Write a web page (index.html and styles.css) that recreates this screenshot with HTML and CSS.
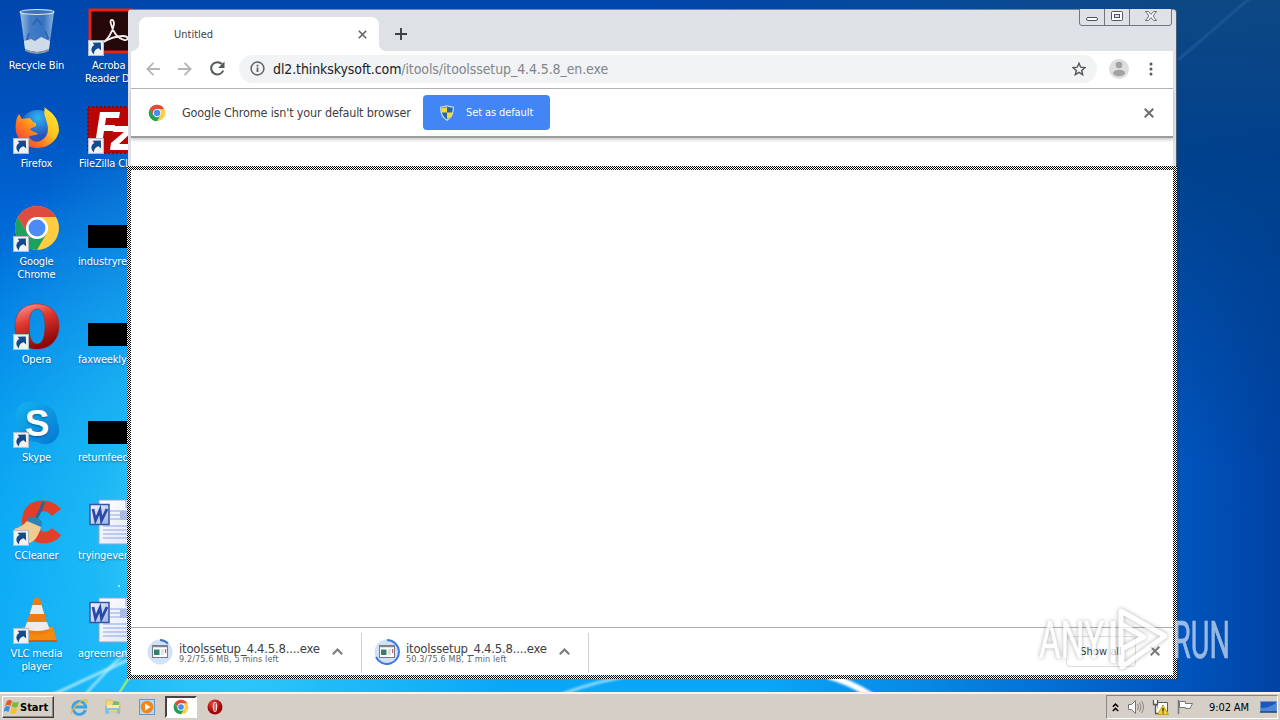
FILE: index.html
```html
<!DOCTYPE html>
<html lang="en">
<head>
<meta charset="utf-8">
<title>Desktop</title>
<link rel="stylesheet" href="styles.css">
</head>
<body>
<svg class="defs" width="0" height="0">
  <defs>
    <linearGradient id="glass" x1="0" x2="1"><stop offset="0" stop-color="#b9d3ee"/><stop offset=".3" stop-color="#4f86c8"/><stop offset=".7" stop-color="#3f7cc4"/><stop offset="1" stop-color="#a9c6e6"/></linearGradient>
    <linearGradient id="fox" x1="1" x2="0" y1="0" y2="1"><stop offset="0" stop-color="#fff03c"/><stop offset=".4" stop-color="#ffc420"/><stop offset=".65" stop-color="#ff7a20"/><stop offset="1" stop-color="#f0244c"/></linearGradient>
    <radialGradient id="globe" cx=".5" cy=".2"><stop offset="0" stop-color="#2bb4f4"/><stop offset="1" stop-color="#2c51b8"/></radialGradient>
    <linearGradient id="op" x1="0" x2=".4" y1="0" y2="1"><stop offset="0" stop-color="#ffa49c"/><stop offset=".45" stop-color="#e0362e"/><stop offset="1" stop-color="#8c0808"/></linearGradient>
    <linearGradient id="sky" x1="0" x2="1" y1="0" y2="1"><stop offset="0" stop-color="#14b4ee"/><stop offset="1" stop-color="#0478d4"/></linearGradient>
    <linearGradient id="page" x2="1" y2="1"><stop offset="0" stop-color="#fff"/><stop offset="1" stop-color="#dfe4f6"/></linearGradient>
    <linearGradient id="wbox" x2="1" y2="1"><stop offset="0" stop-color="#f4f7ff"/><stop offset="1" stop-color="#9db2e4"/></linearGradient>
    <radialGradient id="redball" cx=".4" cy=".3"><stop offset="0" stop-color="#f05048"/><stop offset="1" stop-color="#a00808"/></radialGradient>
    <filter id="soft"><feGaussianBlur stdDeviation="1"/></filter>
    <symbol id="shortcut" viewBox="0 0 15 15">
      <rect x=".5" y=".5" width="14" height="14" fill="#f0f2f4" stroke="#b4bcc8"/>
      <path d="M5.500 13.500C2.200 10.500 2.500 6.500 6 4.800L4.300 2.500 12 2.300 12.300 9.800 10 7.800C7.200 8.300 5.600 10.200 5.500 13.500z" fill="#124a8c"/>
    </symbol>
    <symbol id="chrome" viewBox="0 0 48 48">
      <circle cx="24" cy="24" r="22" fill="#ffcd42"/>
      <path d="M4.950 13A22 22 0 0 0 24 46L33.500 29.500 14.500 29.500z" fill="#1da15f"/>
      <path d="M4.950 13A22 22 0 0 1 43.050 13H24L14.500 29.500z" fill="#de4b40"/>
      <circle cx="24" cy="24" r="11" fill="#fff"/><circle cx="24" cy="24" r="8.500" fill="#4c8bf5"/>
    </symbol>
    <symbol id="word" viewBox="0 0 48 48">
      <path d="M11 2h37v44H11z" fill="url(#page)" stroke="#93a3cf"/>
      <path d="M22 13h26M22 17h26M22 21h26M15 28h33M15 32h33M15 36h33M15 40h33" stroke="#8ba5e4"/>
      <path d="M32 13h16v9H32z" fill="#a9b9e2"/><path d="M38 2v8h10" fill="#fff" stroke="#8ea0cc"/>
      <rect x="2" y="6.500" width="19" height="20" fill="url(#wbox)" stroke="#3455a8" stroke-width="1.500"/>
      <path d="M5 11l2.500 11.500L12 12l1.500 10.500L19 11" fill="none" stroke="#284ca6" stroke-width="2.800"/>
    </symbol>
    <symbol id="setup" viewBox="0 0 26 26">
      <circle cx="13" cy="13" r="12.500" fill="#d3e1f8"/>
      <rect x="5.500" y="6.500" width="15" height="12" fill="#fff" stroke="#777c84"/>
      <path d="M5 7.500h16" stroke="#7e8793" stroke-width="1.500"/><path d="M7 10.500h5.500v5.500H7z" fill="#34806e"/><path d="M14 11h3M14 13h3M14 15h3" stroke="#abb" stroke-width=".8"/><path d="M18.700 10v4" stroke="#c33"/>
    </symbol>
  </defs>
</svg>

<main class="desktop">
  <svg class="wallpaper" viewBox="0 0 1280 720">
    <path d="M0 720Q70 686 150 650L220 620" fill="none" stroke="#d8fbff" stroke-width="3" opacity=".7" filter="url(#soft)"/>
    <path d="M84 696Q102 675 130 648" fill="none" stroke="#c8f5ff" stroke-width="2.500" opacity=".7" filter="url(#soft)"/>
    <path d="M118 695L132 673" stroke="#9be870" stroke-width="2.500" opacity=".9"/>
    <path d="M555 697Q590 682 640 674" fill="none" stroke="#c0f0ff" stroke-width="3" opacity=".7" filter="url(#soft)"/>
    <path d="M828 676Q850 682 872 696" fill="none" stroke="#fff" stroke-width="6" filter="url(#soft)"/>
    <path d="M1178 60L1250 -2" stroke="#4f86bc" stroke-width="1.500" opacity=".5" filter="url(#soft)"/>
    <circle cx="119" cy="586" r="1" fill="#d8f8ff"/>
  </svg>

  <section class="icons">
    <div class="item"><svg viewBox="0 0 48 48"><path d="M7 4h34l-5 37q-12 6-24 0z" fill="url(#glass)" opacity=".85"/><ellipse cx="24" cy="4" rx="17" ry="2.500" fill="#3f74b8" stroke="#d8e6f4" stroke-width="1.200"/><path d="M20 17l4-6 5 6M16 25l-2 7 7 1M30 33l5-3-3-7" fill="none" stroke="#2f65b0" stroke-width="2"/><path d="M11 33l7-2 4 2 6-4 9 4-1 8q-12 6-24 0z" fill="#dfe6ec" opacity=".9"/><path d="M12 41q12 6 24 0v2q-12 6-24 0z" fill="#8e959c"/></svg><span>Recycle Bin</span></div>
    <div class="item"><svg viewBox="0 0 48 48"><circle cx="25" cy="23" r="19" fill="url(#globe)"/><path d="M31 1c7 5 15 10 15 24a22 21 0 0 1-43 1C2 19 3 12 6 8l3 5 8-1c2 3 4 5 6 5v3l-6 3c2 3 6 3 8 5-4 2-8 1-9 3 3 5 9 6 13 3 6-4 7-10 5-17-1-5-4-8-2-16z" fill="url(#fox)"/></svg><svg class="arrow"><use href="#shortcut"/></svg><span>Firefox</span></div>
    <div class="item"><svg><use href="#chrome"/></svg><svg class="arrow"><use href="#shortcut"/></svg><span>Google<br>Chrome</span></div>
    <div class="item"><svg viewBox="0 0 48 48"><path fill-rule="evenodd" d="M24 2C38 2 46 11 46 24S38 47 24 47 2 37 2 24 10 2 24 2zM24 7c-6 0-8 8-8 17s2 18 8 18 8-9 8-18-2-17-8-17z" fill="url(#op)" stroke="#a61b18" stroke-width=".5"/></svg><svg class="arrow"><use href="#shortcut"/></svg><span>Opera</span></div>
    <div class="item"><svg viewBox="0 0 48 48"><path d="M14 2c6-1 9 1 12 2 11 0 19 8 18 18 5 8 1 20-9 22-5 1-8-1-11-2C12 42 4 34 5 24-1 14 5 3 14 2z" fill="url(#sky)"/><text x="24" y="36" class="skype-s">S</text></svg><svg class="arrow"><use href="#shortcut"/></svg><span>Skype</span></div>
    <div class="item"><svg viewBox="0 0 48 48"><path d="M48 11C38-1 15-1 10 16c-6 20 14 37 33 26 2-1 4-3 5-5l-9-7c-6 7-15 4-15-7s9-13 15-5z" fill="#e23f2a"/><path d="M31 4l-9 20" stroke="#22689c" stroke-width="3"/><path d="M15 20q9-3 14 4l-1 6-13-4z" fill="#2b84b8"/><path d="M14 23l14 6c-2 8-6 14-11 16L1 31q8-2 13-8z" fill="#f1cc92"/></svg><svg class="arrow"><use href="#shortcut"/></svg><span>CCleaner</span></div>
    <div class="item"><svg viewBox="0 0 48 48"><path d="M9 31h31l4 15H5z" fill="#f28a12"/><path d="M5 44h39v2H5z" fill="#c96206"/><path d="M21 3q3-3 6 0l10 33q-13 5-26 0z" fill="#f07c10"/><path d="M19.500 9h9l2.700 9H16.800zM14 26h20l2.500 7q-12.500 4-25 0z" fill="#ececec"/></svg><svg class="arrow"><use href="#shortcut"/></svg><span>VLC media<br>player</span></div>
  </section>
  <section class="icons second">
    <div class="item"><svg viewBox="0 0 48 48"><rect x="5" y="2" width="44" height="42" fill="#25080a" stroke="#e6230f" stroke-width="3"/><path d="M17 35c6-3 11-12 12-19 0-6-5-5-3 0 2 9 7 14 13 16 5 1 5-4-1-4-8 0-15 3-21 7z" fill="none" stroke="#f4eef0" stroke-width="1.800"/></svg><svg class="arrow"><use href="#shortcut"/></svg><span class="acro"><i>Acroba</i><br>Reader D</span></div>
    <div class="item"><svg viewBox="0 0 48 48"><rect x="3" y="1" width="46" height="46" fill="#b80505" stroke="#980000" stroke-width="2" stroke-dasharray="2 2"/><path d="M10 38L15 6h20l-1 6H21l-1 7h10l-1 6H19l-2 13zM29 20h19v5L34 38h14v6H25l1-7 13-11H28z" fill="#fff"/></svg><svg class="arrow"><use href="#shortcut"/></svg><span class="fz">FileZilla Cli</span></div>
    <div class="item"><svg viewBox="0 0 48 48"><path d="M3 21h45v23H3z"/></svg><span>industryre</span></div>
    <div class="item"><svg viewBox="0 0 48 48"><path d="M3 21h45v23H3z"/></svg><span class="fax">faxweekly</span></div>
    <div class="item"><svg viewBox="0 0 48 48"><path d="M3 21h45v23H3z"/></svg><span>returnfeed</span></div>
    <div class="item doc"><svg><use href="#word"/></svg><span>tryingever</span></div>
    <div class="item doc"><svg><use href="#word"/></svg><span>agreement</span></div>
  </section>

  <section class="window">
    <header class="tabstrip">
      <div class="tab"><span>Untitled</span><svg width="9" height="9" viewBox="0 0 9 9"><path d="M.8.8l7.400 7.400M8.200.8L.8 8.200" stroke="#5f6367" stroke-width="1.600"/></svg></div>
      <svg class="plus" width="12" height="12" viewBox="0 0 12 12"><path d="M6 0v12M0 6h12" stroke="#3c4043" stroke-width="1.900"/></svg>
      <svg class="caption" width="94" height="18" viewBox="0 0 94 18"><path d="M.5 0v14q0 2.500 2.500 2.500h87q2.500 0 2.500-2.500V0M25.500 0v16.500M50.500 0v16.500" fill="#dee1e6" stroke="#70767e"/><rect x="7.500" y="8.500" width="11" height="3" rx="1.500" fill="#fff" stroke="#50555c"/><rect x="32.500" y="2.500" width="11" height="9" rx="1" fill="#fff" stroke="#50555c"/><rect x="35.500" y="5.500" width="5" height="3" fill="#dee1e6" stroke="#50555c"/><path d="M66.500 2.500h3l2.500 3 2.500-3h3L74 7l3.500 4.500h-3L72 8.500l-2.500 3h-3L70 7z" fill="#fff" stroke="#6a6f76"/></svg>
    </header>
    <nav class="toolbar">
      <svg width="14" height="14" viewBox="0 0 14 14"><path d="M14 7H1.500M7.500.8L1.300 7l6.200 6.200" fill="none" stroke="#b4b6b9" stroke-width="1.800"/></svg>
      <svg width="14" height="14" viewBox="0 0 14 14"><path d="M0 7h12.500M6.500.8L12.700 7l-6.200 6.200" fill="none" stroke="#b4b6b9" stroke-width="1.800"/></svg>
      <svg width="15" height="15" viewBox="0 0 15 15"><path d="M13.200 9.500A6.200 6.200 0 1 1 12 3.200" fill="none" stroke="#54585c" stroke-width="2"/><path d="M14.500.5v6.400H8.100z" fill="#54585c"/></svg>
      <div class="omnibox">
        <svg width="15" height="15" viewBox="0 0 15 15"><circle cx="7.500" cy="7.500" r="6.400" fill="none" stroke="#5f6368" stroke-width="1.500"/><path d="M7.500 6.500V11M7.500 3.700v1.700" stroke="#5f6368" stroke-width="1.800"/></svg>
        <span class="url"><b>dl2.thinkskysoft.com</b><em>/itools/itoolssetup_4.4.5.8_en.exe</em></span>
        <svg width="14" height="14" viewBox="0 0 14 14"><path d="M7 1.200l1.700 4 4.300.4-3.300 2.800 1 4.300L7 10.400l-3.700 2.300 1-4.300L1 5.600l4.300-.4z" fill="none" stroke="#54585c" stroke-width="1.400"/></svg>
      </div>
      <svg class="avatar" width="20" height="20" viewBox="0 0 20 20"><circle cx="10" cy="10" r="10" fill="#dedede"/><circle cx="10" cy="6" r="3.300" fill="#a2a2a2"/><ellipse cx="10" cy="14" rx="6" ry="3.200" fill="#a2a2a2"/></svg>
      <svg class="dots" width="4" height="14" viewBox="0 0 4 14"><path d="M2 .4a1.500 1.500 0 1 1 0 3 1.500 1.500 0 0 1 0-3M2 5.500a1.500 1.500 0 1 1 0 3 1.500 1.500 0 0 1 0-3M2 10.600a1.500 1.500 0 1 1 0 3 1.500 1.500 0 0 1 0-3" fill="#54585c"/></svg>
    </nav>
    <div class="infobar">
      <svg width="18" height="18"><use href="#chrome"/></svg>
      <span class="msg">Google Chrome isn't your default browser</span>
      <div class="primary"><svg width="14" height="16" viewBox="0 0 14 16"><path d="M7 .8Q9.500 2 13.200 2 14 11 7 15.200 0 11 .8 2 4.500 2 7 .8z" fill="#2566ac" stroke="#d8dfe8" stroke-width="1.200"/><path d="M7 2v5.500H1.500Q1.200 5 1.500 3 5 3 7 2zM7 7.500h5.500Q11.500 12 7 14z" fill="#fbd935"/></svg><span>Set as default</span></div>
      <svg class="x" width="10" height="10" viewBox="0 0 10 10"><path d="M.7.700l8.600 8.600M9.300.7L.7 9.300" stroke="#6b6e70" stroke-width="2"/></svg>
    </div>
    <div class="page"></div>
    <footer class="shelf">
      <div class="download"><svg width="26" height="26"><use href="#setup"/><path d="M13 1A12 12 0 0 1 21 4.500" fill="none" stroke="#4175d0" stroke-width="2"/></svg><div class="file"><span>itoolssetup_4.4.5.8....exe</span><small>9.2/75.6 MB, 5 mins left</small></div><svg width="11" height="7" viewBox="0 0 11 7"><path d="M.8 6.200L5.500 1.500l4.700 4.700" fill="none" stroke="#76797d" stroke-width="2"/></svg></div>
      <div class="download"><svg width="26" height="26"><use href="#setup"/><path d="M13 1A12 12 0 1 1 2 18" fill="none" stroke="#3c7ae0" stroke-width="2"/></svg><div class="file"><span>itoolssetup_4.4.5.8....exe</span><small>50.3/75.6 MB, 1 min left</small></div><svg width="11" height="7" viewBox="0 0 11 7"><path d="M.8 6.200L5.500 1.500l4.700 4.700" fill="none" stroke="#76797d" stroke-width="2"/></svg></div>
      <div class="showall">Show all</div>
      <svg class="x2" width="10" height="10" viewBox="0 0 10 10"><path d="M.7.700l8.600 8.600M9.300.7L.7 9.300" stroke="#77797b" stroke-width="2"/></svg>
    </footer>
  </section>
  <div class="outline"></div>

  <svg class="watermark" viewBox="0 0 200 72">
    <g class="mark left"><text x="4" y="54" textLength="65" lengthAdjust="spacingAndGlyphs">ANY</text><path d="M78 17v42M86 62V7l44 25-43 31V45l22-12-23-13"/></g>
    <g class="mark"><text x="138" y="54" textLength="57" lengthAdjust="spacingAndGlyphs">RUN</text></g>
  </svg>
</main>

<footer class="taskbar">
  <div class="start"><svg width="17" height="16" viewBox="0 0 17 16"><path d="M4 2q3-2 5 0L7.500 7q-3-2-5.500 0z" fill="#e8572a"/><path d="M10 2.500q3 2 6 0L14.500 8q-3 1.500-6-.5z" fill="#7db93a"/><path d="M2 8q3-2 5 0l-1.500 5q-3-2-5 0z" fill="#3d8fd8"/><path d="M8.300 8.500q3 2 6 0L13 14q-3 2-6-.5z" fill="#f6c22c"/></svg><b>Start</b></div>
  <div class="quick">
    <svg width="18" height="18" viewBox="0 0 18 18"><path d="M15.500 12A6.500 6.500 0 1 1 15.800 9H5" fill="none" stroke="#3aa4e4" stroke-width="2.800"/><path d="M2 16C-1 13 12 0 16.500 2q1.500 1.500-1 4" fill="none" stroke="#e6b93c" stroke-width="1.300"/></svg>
    <svg width="18" height="18" viewBox="0 0 18 18"><path d="M2 2h6l1 2h7v10H2z" fill="#f3d77a" stroke="#d9b654" stroke-width=".7"/><path d="M10 3l5 1v3H8z" fill="#78b878"/><path d="M1 8h15v8h-3v-4H5v4H1z" fill="#7cc0ea" opacity=".9"/><path d="M3 7h12v3H3z" fill="#fbeaa6"/></svg>
    <svg width="18" height="18" viewBox="0 0 18 18"><rect x="1.500" y="1.500" width="15" height="15" fill="#b7d8f5" stroke="#5a9bd6"/><circle cx="9" cy="9" r="6.300" fill="#f28618"/><path d="M7 5.500L12.500 9 7 12.500z" fill="#fff"/></svg>
    <div class="active"><svg width="16" height="16"><use href="#chrome"/></svg></div>
    <svg width="18" height="18" viewBox="0 0 18 18"><circle cx="9" cy="9" r="7.500" fill="url(#redball)"/><ellipse cx="9" cy="9" rx="2.200" ry="5" fill="#f8d8d4"/><path d="M9 5v8" stroke="#a01010"/></svg>
  </div>
  <div class="tray">
    <svg class="chev" width="7" height="9" viewBox="0 0 7 9"><path d="M.8 3.700l2.700-2.600 2.700 2.600M.8 8l2.700-2.600L6.200 8" fill="none" stroke="#000" stroke-width="1.500"/></svg>
    <svg width="17" height="16" viewBox="0 0 17 16"><path d="M1.500 5.500h3l4-4v13l-4-4h-3z" fill="#fff" stroke="#777"/><path d="M10.500 5q2 3 0 6M12.500 3.500q3 4.500 0 9M14.500 2q4 6 0 12" fill="none" stroke="#858585"/></svg>
    <svg width="17" height="16" viewBox="0 0 17 16"><path d="M5 3.500h10.500v9H5z" fill="#fff" stroke="#5c5c5c"/><path d="M1.500 1v4.500h4V1M3.500 5v9.500H8" fill="#fff" stroke="#555" stroke-width="1.300"/><path d="M11 6l5.500 9.500h-11z" fill="#f7cf25" stroke="#b08a08" stroke-width=".7"/><path d="M11 9v3.500M11 13.500v1" stroke="#222" stroke-width="1.300"/></svg>
    <svg width="17" height="16" viewBox="0 0 17 16"><path d="M2.500 2.500h6v2h7l-2.500 5H8.500v-1h-6z" fill="#fff" stroke="#777"/><path d="M1.500 1v14" stroke="#777" stroke-width="1.500"/></svg>
    <time>9:02 AM</time>
    <svg class="show" width="17" height="14" viewBox="0 0 17 14"><path d="M.5 1.500h16v10H.5z" fill="#1d56b8" stroke="#6d94c8"/><path d="M1 8q8 0 15-5v8H1z" fill="#4a86da"/><path d="M0 12h17" stroke="#203c70" stroke-width="1.500"/></svg>
  </div>
</footer>
</body>
</html>
```
FILE: styles.css
```css
* { box-sizing: border-box; }
body { margin: 0; width: 1280px; height: 720px; overflow: hidden; display: flex; flex-direction: column; font-family: "DejaVu Sans Condensed", "DejaVu Sans", sans-serif; font-stretch: condensed; font-size: 11px; color: #3c4043; }
svg { display: block; flex: none; }
.defs { position: absolute; }
.desktop { position: relative; height: 692px; overflow: hidden; display: flex; align-items: flex-start;
  background:
    radial-gradient(ellipse 300px 460px at 230px 540px, rgba(80,225,250,.9), rgba(50,205,248,.55) 45%, transparent 100%),
    linear-gradient(90deg, transparent 1040px, rgba(0,55,135,.1) 1180px, rgba(0,50,135,.55) 1280px),
    linear-gradient(90deg, transparent 60%, #0058c4 92%),
    linear-gradient(#0046ac 0, #0052be 110px, #0064d2 200px, #007ee4 310px, #0094ee 420px, #02a0f4 540px, #0aa6f8 692px);
}
.desktop::before { content: ""; position: absolute; left: 640px; right: 0; top: 0; height: 460px; background: linear-gradient(rgba(14,72,132,1) 0, rgba(0,64,138,.95) 35%, transparent); -webkit-mask-image: linear-gradient(90deg, transparent, #000 80%); mask-image: linear-gradient(90deg, transparent, #000 80%); }
.wallpaper { position: absolute; left: 0; top: 0; width: 1280px; height: 720px; }
.icons { position: relative; width: 73px; padding-top: 8px; display: flex; flex-direction: column; }
.item { position: relative; flex: none; height: 98px; display: flex; flex-direction: column; align-items: center; gap: 3px; color: #fff; text-align: center; line-height: 13px; text-shadow: 0 1px 2px rgba(0,30,80,.5); letter-spacing: -.15px; white-space: nowrap; }
.item > svg:first-child { width: 48px; height: 48px; }
.item .arrow { position: absolute; left: 13px; top: 32px; width: 16px; height: 16px; }
.icons.second { width: 62px; margin-left: 5px; }
.second .item { align-items: flex-start; text-align: left; }
.second .item > svg:first-child { margin-left: 7px; }
.second .doc > svg:first-child { margin-left: 10px; }
.second .item .arrow { left: 10px; }
.second i { font-style: normal; padding-left: 7px; }
.second .acro { padding-left: 7px; }
.second .fz { padding-left: 1px; }
.skype-s { font: bold 37px "Liberation Sans", sans-serif; fill: #fff; text-anchor: middle; }

.window { position: absolute; left: 128px; top: 9px; width: 1048px; height: 668px; border: solid #dee1e6; border-width: 0 3px; border-top: 1px solid #7a838f; border-radius: 4px 4px 0 0; background: #fff; display: flex; flex-direction: column; box-shadow: 1px 0 0 #4a5d78; }
.tabstrip { height: 41px; background: #dee1e6; display: flex; align-items: flex-start; padding-left: 8px; }
.tab { position: relative; width: 240px; height: 34px; margin-top: 7px; background: #fff; border-radius: 8px 8px 0 0; display: flex; align-items: center; justify-content: space-between; padding: 0 12px 0 35px; }
.tab::before, .tab::after { content: ""; position: absolute; bottom: 0; width: 8px; height: 8px; }
.tab::before { left: -8px; background: radial-gradient(circle at 0 0, transparent 8px, #fff 8.5px); }
.tab::after { right: -8px; background: radial-gradient(circle at 100% 0, transparent 8px, #fff 8.5px); }
.plus { margin: 18px 0 0 16px; }
.caption { margin: -1px 0 0 auto; }
.toolbar { height: 38px; border-bottom: 1px solid #b2b3b5; display: flex; align-items: center; padding: 0 20px 2px 15px; gap: 18px; }
.omnibox { width: 858px; height: 28px; border-radius: 14px; background: #f1f3f4; margin-left: -4px; display: flex; align-items: center; padding: 0 11px; }
.url { flex: 1; margin-left: 8px; font-size: 14px; letter-spacing: -.1px; white-space: nowrap; }
.url b { font-weight: 400; color: #202124; }
.url em { font-style: normal; color: #80868b; }
.avatar { margin-left: -6px; }
.dots { margin-left: 2px; }
.infobar { height: 49px; border-bottom: 2px solid #9b9d9f; display: flex; align-items: center; padding: 0 19px 0 17px; box-shadow: 0 2px 3px rgba(0,0,0,.2); }
.msg { width: 241px; margin-left: 16px; font-size: 12.500px; letter-spacing: -.16px; white-space: nowrap; }
.primary { width: 127px; height: 35px; border-radius: 4px; background: #4285f4; color: #fff; display: flex; align-items: center; padding-left: 17px; gap: 12px; letter-spacing: -.1px; white-space: nowrap; }
.infobar .x { margin-left: auto; }
.page { flex: 1; }
.shelf { height: 50px; border-top: 1px solid #adaeb0; display: flex; align-items: center; }
.download { width: 227px; height: 40px; display: flex; align-items: center; border-right: 1px solid #d0d2d4; padding: 0 0 2px 12px; }
.download:first-child { width: 231px; padding-left: 16px; }
.file { width: 153px; margin-left: 6px; padding-top: 2px; display: flex; flex-direction: column; font-size: 13px; letter-spacing: -.22px; line-height: 13px; white-space: nowrap; }
.file small { font-size: 9px; letter-spacing: .12px; line-height: 9px; color: #5f6368; }
.showall { width: 70px; height: 31px; margin: 0 0 2px auto; border: 1px solid #dcdddf; border-radius: 4px; display: flex; align-items: center; justify-content: center; }
.x2 { margin: 0 13px 3px 14px; }

.outline { position: absolute; left: 127px; top: 166px; width: 1050px; height: 513px; background: repeating-conic-gradient(#000 0 25%, #fff 0 50%) 0 0/2px 2px; padding: 4px; -webkit-mask: linear-gradient(#000 0 0) content-box exclude, linear-gradient(#000 0 0); mask: linear-gradient(#000 0 0) content-box exclude, linear-gradient(#000 0 0); }
.watermark { position: absolute; left: 1035px; top: 604px; width: 200px; height: 72px; overflow: visible; font: 51px Roboto, sans-serif; }
.mark { fill: #fff; stroke: #fff; stroke-width: .6; opacity: .6; }
.mark.left { opacity: .75; filter: drop-shadow(0 0 2px rgba(60,60,60,.55)); }
.mark path { stroke-width: 5; stroke-linejoin: round; fill: none; }

.taskbar { height: 28px; background: #d6cfc7; border-top: 2px solid #f6f4f0; display: flex; align-items: center; padding: 0 2px; color: #000; }
.start { width: 52px; height: 22px; border: 1px solid; border-color: #fff #404040 #404040 #fff; box-shadow: inset -1px -1px #8b8680; display: flex; align-items: center; font-size: 11px; }
.quick { display: flex; align-items: center; margin-left: 16px; gap: 16px; }
.active { width: 32px; height: 22px; margin: 0 -7px; border: 2px solid; border-color: #444 #fff #fff #444; background: #fff; display: flex; align-items: center; justify-content: center; }
.tray { height: 24px; width: 172px; margin-left: auto; border: 1px solid; border-color: #888580 #fff #fff #888580; display: flex; align-items: center; padding-left: 5px; gap: 8px; }
time { width: 42px; margin-left: 7px; white-space: nowrap; letter-spacing: -.1px; }
.show { margin-left: 1px; }
```
